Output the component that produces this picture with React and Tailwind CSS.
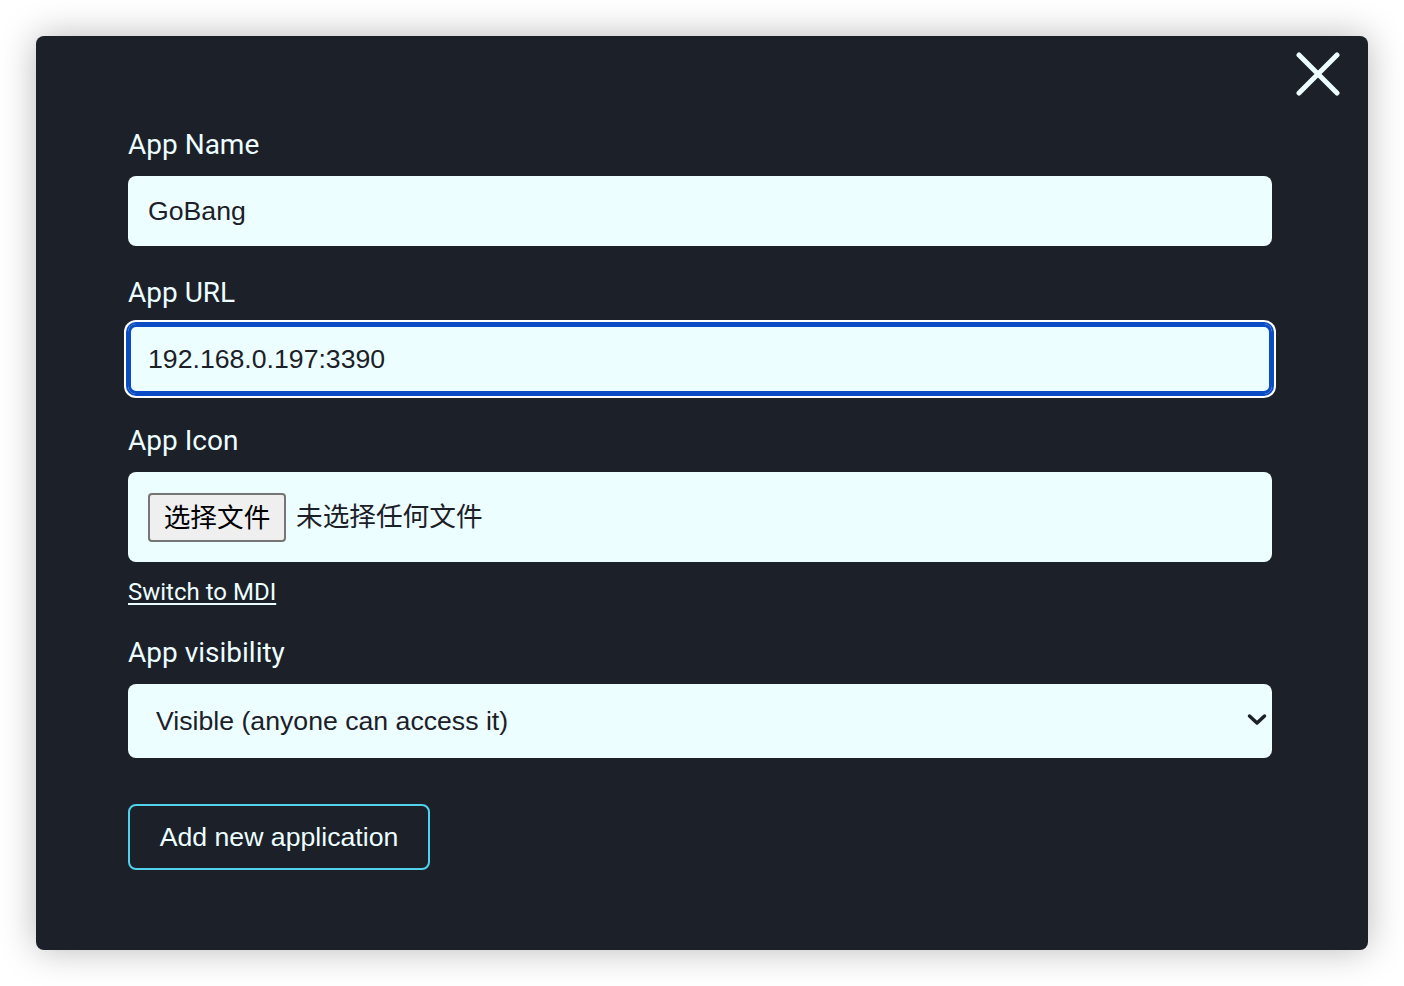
import React from 'react';

const labelCls = "block font-['Roboto',sans-serif] text-[28px] leading-[33px] text-[#ecfeff] mb-[15px]";
const fieldCls = "w-full h-[70px] rounded-lg bg-[#ecfeff] px-5 font-['Liberation_Sans',Arial,sans-serif] text-[26.67px] text-[#1c2028] outline-none";

export default function App() {
  return (
    <div className="min-h-screen bg-white p-[36px]">
      <div className="relative w-[1332px] h-[914px] rounded-lg bg-[#1c2029] shadow-[0_0_36px_rgba(0,0,0,0.28)] pt-[92px] pl-[92px] pr-[96px]">
        {/* close */}
        <button className="absolute right-[28px] top-[16px] w-[44px] h-[44px] flex items-center justify-center">
          <svg width="44" height="44" viewBox="0 0 44 44" fill="none">
            <path d="M3 3L41 41M41 3L3 41" stroke="#ecfeff" strokeWidth="5" strokeLinecap="round" />
          </svg>
        </button>

        <label className={labelCls}>App Name</label>
        <input readOnly value="GoBang" className={fieldCls} />

        <label className={labelCls + " mt-[30px]"}>App URL</label>
        <input
          readOnly
          value="192.168.0.197:3390"
          className={fieldCls + " shadow-[inset_0_0_0_3px_#0b4bc4,0_0_0_2px_#0b4bc4,0_0_0_4px_#ffffff]"}
        />

        <label className={labelCls + " mt-[30px]"}>App Icon</label>
        <div className="w-full h-[90px] rounded-lg bg-[#ecfeff] px-5 flex items-center font-['Noto_Sans_CJK_SC',sans-serif] text-[26.67px] text-[#1c2028]">
          <span className="h-[49px] w-[138px] flex items-center justify-center rounded bg-[#efefef] border-2 border-[#767676] text-black leading-none pb-[2px]">
            选择文件
          </span>
          <span className="ml-[10px] leading-none pb-[4px]">未选择任何文件</span>
        </div>

        <div className="mt-[16px] h-[28px]">
          <a className="font-['Roboto',sans-serif] text-[24px] leading-[28px] text-[#ecfeff] underline underline-offset-[3px]">
            Switch to MDI
          </a>
        </div>

        <label className={labelCls + " mt-[30px]"}>App visibility</label>
        <div className="relative">
          <select className="w-full h-[74px] appearance-none rounded-lg bg-[#ecfeff] pl-[28px] font-['Liberation_Sans',Arial,sans-serif] text-[26.67px] text-[#1c2028] outline-none">
            <option>Visible (anyone can access it)</option>
          </select>
          <svg className="absolute right-[5px] top-[29px] pointer-events-none" width="20" height="14" viewBox="0 0 20 14" fill="none">
            <path d="M2.5 3L10 10L17.5 3" stroke="#1c2028" strokeWidth="3.5" strokeLinecap="round" strokeLinejoin="round" />
          </svg>
        </div>

        <button className="mt-[46px] w-[302px] h-[66px] rounded-lg border-2 border-[#4fd2ea] font-['Liberation_Sans',Arial,sans-serif] text-[26.67px] text-[#ecfeff]">
          Add new application
        </button>
      </div>
    </div>
  );
}
